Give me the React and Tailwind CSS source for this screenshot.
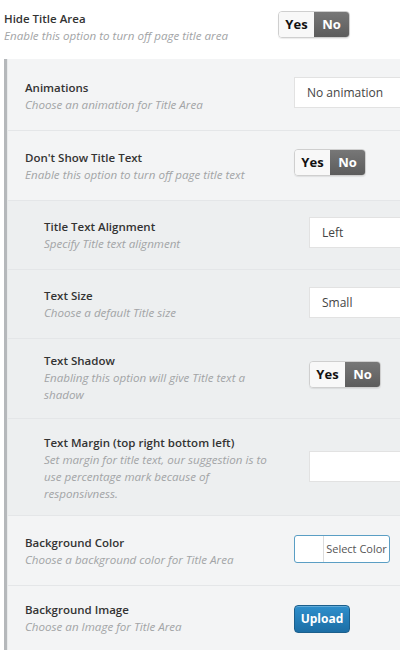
import React from "react";

const font = { fontFamily: "'Open Sans', 'Noto Sans', sans-serif" };

function Toggle() {
  return (
    <div className="flex h-[27px] w-[72px] rounded-[4px] border border-[#cfcfcf] overflow-hidden shadow-[0_1px_1px_rgba(0,0,0,0.08)] text-[13px] font-bold">
      <div className="flex w-[36px] items-center justify-center bg-[#f8f8f8] text-[#111]">Yes</div>
      <div className="flex w-[36px] items-center justify-center bg-gradient-to-b from-[#777] to-[#5c5c5c] text-white">No</div>
    </div>
  );
}

function SelectBox({ value, w }) {
  return (
    <div className={`flex h-[31px] items-center border border-[#e2e2e2] bg-white pl-3 text-[12px] text-[#444] ${w}`}>
      {value}
    </div>
  );
}

function Row({ title, desc, children, last, textW, pad }) {
  return (
    <div className={`flex items-start ${pad} ${last ? "" : "border-b border-[#e4e6e8]"}`}>
      <div className={textW}>
        <div className="text-[11.5px] font-semibold leading-[17px] text-[#333]">{title}</div>
        <div className="text-[11.6px] italic leading-[17px] text-[#a2a4a6]">{desc}</div>
      </div>
      {children}
    </div>
  );
}

export default function App() {
  return (
    <div className="h-[650px] w-[400px] overflow-hidden bg-white" style={font}>
      {/* top row */}
      <div className="flex items-start pl-[4px] pt-[10px] pb-[15px]">
        <div className="w-[274px]">
          <div className="text-[11.5px] font-semibold leading-[17px] text-[#333]">Hide Title Area</div>
          <div className="text-[11.6px] italic leading-[17px] text-[#a2a4a6]">Enable this option to turn off page title area</div>
        </div>
        <div className="pt-[1px]"><Toggle /></div>
      </div>

      {/* section */}
      <div className="ml-[4px] flex">
        <div className="w-[3px] shrink-0 bg-[#b5b8bb]" />
        <div className="flex-1 bg-[#f3f4f5] border-l border-[#e8eaeb]">
          <Row title="Animations" desc="Choose an animation for Title Area" textW="w-[269px] shrink-0" pad="pl-[17px] pt-[20px] pb-[17px]">
            <div className="-mt-[2px]"><SelectBox value="No animation" w="w-[120px]" /></div>
          </Row>
          <Row title="Don't Show Title Text" desc="Enable this option to turn off page title text" textW="w-[269px] shrink-0" pad="pl-[17px] pt-[18px] pb-[17px]">
            <div><Toggle /></div>
          </Row>

          {/* nested */}
          <div className="bg-[#edeff0] border-b border-[#e4e6e8]">
            <Row title="Title Text Alignment" desc="Specify Title text alignment" textW="w-[265px] shrink-0" pad="pl-[36px] pt-[17px] pb-[17px]">
              <div className="-mt-[1px]"><SelectBox value="Left" w="w-[100px]" /></div>
            </Row>
            <Row title="Text Size" desc="Choose a default Title size" textW="w-[265px] shrink-0" pad="pl-[36px] pt-[17px] pb-[17px]">
              <div><SelectBox value="Small" w="w-[100px]" /></div>
            </Row>
            <Row title="Text Shadow" desc={<span className="block w-[232px]">Enabling this option will give Title text a shadow</span>} textW="w-[265px] shrink-0" pad="pl-[36px] pt-[13px] pb-[15px]">
              <div className="pt-[9px]"><Toggle /></div>
            </Row>
            <Row title="Text Margin (top right bottom left)" desc={<span className="block w-[232px]">Set margin for title text, our suggestion is to use percentage mark because of responsivness.</span>} last textW="w-[265px] shrink-0" pad="pl-[36px] pt-[15px] pb-[13px]">
              <div className="pt-[17px]"><SelectBox value="" w="w-[100px]" /></div>
            </Row>
          </div>

          <Row title="Background Color" desc="Choose a background color for Title Area" textW="w-[269px] shrink-0" pad="pl-[17px] pt-[18px] pb-[17px]">
            <div className="mt-[1px] flex h-[28px] w-[96px] overflow-hidden rounded-[3px] border border-[#5a9ec4] bg-white">
              <div className="w-[29px] border-r border-[#dcdcdc]" />
              <div className="flex flex-1 items-center justify-center text-[11px] text-[#555]">Select Color</div>
            </div>
          </Row>
          <Row title="Background Image" desc="Choose an Image for Title Area" textW="w-[269px] shrink-0" pad="pl-[17px] pt-[15px] pb-[17px]">
            <div className="mt-[4px] flex h-[28px] w-[56px] items-center justify-center rounded-[4px] border border-[#1b5f8c] bg-gradient-to-b from-[#2e8fcc] to-[#1c6ea5] text-[12px] font-bold text-white shadow-[inset_0_1px_0_rgba(255,255,255,0.25)]">
              Upload
            </div>
          </Row>
        </div>
      </div>
    </div>
  );
}
